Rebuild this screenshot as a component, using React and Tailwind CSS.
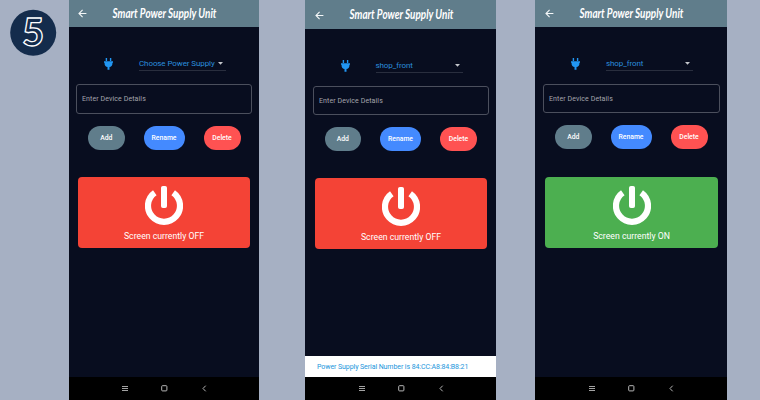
import React from "react";

function BackArrow() {
  return (
    <svg className="h-[9px] w-[9px] shrink-0" viewBox="0 0 9 9" fill="none" stroke="#f4f7f8" strokeWidth="1.1">
      <path d="M8.4 4.5H1M4.6 0.9L1 4.5l3.6 3.6" />
    </svg>
  );
}

function Title() {
  return (
    <svg className="h-[22px] w-[112px] shrink-0 overflow-visible" viewBox="0 0 112 22">
      <text
        x="0.5"
        y="14.6"
        fill="#ffffff"
        fontFamily="Lato, 'Liberation Sans', sans-serif"
        fontStyle="italic"
        fontWeight="700"
        fontSize="12.6"
        textLength="104"
        lengthAdjust="spacingAndGlyphs"
      >
        Smart Power Supply Unit
      </text>
    </svg>
  );
}

function Plug() {
  return (
    <svg className="h-[12px] w-[10px] shrink-0" viewBox="0 0 10 12" fill="#2196f3">
      <path d="M1.7 0h1.400v2.900H1.700zM5.900 0h1.400v2.900H5.900zM0 3.200h9v1.500h-.6v1.200c0 1.500-1.300 2.700-2.900 3.200v2.700h-2V9.100C1.900 8.600 0.600 7.400 0.600 5.900V4.700H0z" />
    </svg>
  );
}

function PowerIcon() {
  return (
    <svg className="h-[39px] w-[38px]" viewBox="0 0 38 39" fill="none" stroke="#ffffff">
      <path d="M9.800 6.700A16 16 0 1 0 28.200 6.700" strokeWidth="6.200" />
      <rect x="16.500" y="0.500" width="5" height="21" rx="1" fill="#ffffff" strokeWidth="1" />
    </svg>
  );
}

function NavBar({ inset }) {
  return (
    <div className={`flex h-[23px] shrink-0 items-center bg-black ${inset}`}>
      <svg className="h-[7px] w-[6px]" viewBox="0 0 6 7" fill="none" stroke="#b5b5b5" strokeWidth="0.9">
        <path d="M0 1.500h6M0 3.500h6M0 5.500h6" />
      </svg>
      <svg className="ml-[33px] h-[7px] w-[7px]" viewBox="0 0 7 7" fill="none" stroke="#b5b5b5">
        <rect x="0.700" y="0.700" width="5.200" height="5.200" rx="0.800" />
      </svg>
      <svg className="ml-[34px] h-[7px] w-[5px]" viewBox="0 0 5 7" fill="none" stroke="#b5b5b5">
        <path d="M3.700 0.700L1 3.500L3.700 6.300" />
      </svg>
    </div>
  );
}

function Phone({ frame, header, inset, plugRow, field, buttons, card, nav, selected, on, serial }) {
  return (
    <section className={`flex h-[400px] shrink-0 flex-col bg-[#080d1f] ${frame}`}>
      <header className={`flex shrink-0 items-center bg-[#607d8b] ${header}`}>
        <BackArrow />
        <div className="ml-[25px] flex">
          <Title />
        </div>
      </header>
      <div className={`flex flex-1 flex-col ${inset}`}>
        <div className={`flex h-[18px] shrink-0 items-start ${plugRow}`}>
          <div className="pt-[4px]">
            <Plug />
          </div>
          <div className="ml-[25px] flex h-[17px] w-[87px] items-center justify-between border-b border-[#292e3e] pr-[3px] pt-[3px]">
            <span className="whitespace-nowrap text-[8px] leading-[10px] tracking-[-0.1px] text-[#2b8ddd]">{selected}</span>
            <svg className="h-[3px] w-[5px] shrink-0" viewBox="0 0 5 3" fill="#c4c6cb">
              <path d="M0 0h5L2.500 2.800z" />
            </svg>
          </div>
        </div>
        <div className={`flex shrink-0 items-center rounded-[3px] border border-[#4b4f5d] pl-[5px] text-[7px] text-[#a4a6ad] ${field}`}>
          <span className="tracking-[0.1px]">Enter Device Details</span>
        </div>
        <div className={`flex h-[24px] shrink-0 items-center text-[6.8px] font-medium text-white ${buttons}`}>
          <button className="h-[24px] w-[36.5px] rounded-full bg-[#607d8b] pt-px">Add</button>
          <button className="ml-[19px] h-[24px] w-[41px] rounded-full bg-[#448aff] pt-px">Rename</button>
          <button className="ml-[19px] h-[24px] w-[37px] rounded-full bg-[#ff5252] pt-px">Delete</button>
        </div>
        <div className={`flex h-[71px] shrink-0 flex-col items-center rounded-[4px] pt-[9px] ${card} ${on ? "bg-[#4caf50]" : "bg-[#f44336]"}`}>
          <PowerIcon />
          <span className="mt-[5px] whitespace-nowrap text-[8.7px] leading-[13px] text-white">
            {on ? "Screen currently ON" : "Screen currently OFF"}
          </span>
        </div>
      </div>
      {serial && (
        <div className="flex h-[21px] shrink-0 items-center bg-white pl-[12px] pt-[2px] text-[7px] text-[#2196dc]">
          <span className="whitespace-nowrap tracking-[-0.08px]">Power Supply Serial Number is {serial}</span>
        </div>
      )}
      <NavBar inset={nav} />
    </section>
  );
}

export default function App() {
  return (
    <main className="flex h-[400px] w-[760px] overflow-hidden bg-[#a6b0c3] font-['Roboto','Liberation_Sans',sans-serif]">
      <aside className="w-[69px] shrink-0 pl-[10px] pt-[9px]">
        <svg className="h-[48px] w-[48px]" viewBox="0 0 48 48">
          <circle cx="23.200" cy="23.700" r="23" fill="#142c4c" />
          <text
            x="23"
            y="37.300"
            textAnchor="middle"
            fontFamily="Lato, sans-serif"
            fontWeight="900"
            fontSize="37.500"
            fill="#142c4c"
            stroke="#ffffff"
            strokeWidth="1.300"
          >
            5
          </text>
        </svg>
      </aside>
      <Phone
        frame="w-[190px]"
        header="h-[27px] pl-[9px]"
        inset="pl-[7px]"
        plugRow="mt-[27px] pl-[28px]"
        field="mt-[12px] h-[30px] w-[176px]"
        buttons="mt-[12px] pl-[12px]"
        card="mt-[27px] ml-[2px] w-[172px]"
        nav="pl-[53px]"
        selected="Choose Power Supply"
      />
      <Phone
        frame="ml-[46px] w-[191px]"
        header="h-[29px] pl-[10px] pt-px"
        inset="pl-[8px]"
        plugRow="mt-[27px] pl-[27.5px]"
        field="mt-[12px] h-[29px] w-[176px] pt-px"
        buttons="mt-[12px] pl-[11.5px]"
        card="mt-[27px] ml-[2px] w-[172px]"
        nav="pl-[53.5px]"
        selected="shop_front"
        serial="84:CC:A8:84:B8:21"
      />
      <Phone
        frame="ml-[39px] w-[192px]"
        header="h-[27px] pl-[10px]"
        inset="pl-[8px]"
        plugRow="mt-[27px] pl-[28px]"
        field="mt-[12px] h-[29px] w-[177px] pt-px"
        buttons="mt-[12px] pl-[12px]"
        card="mt-[27.5px] ml-[2px] w-[173px]"
        nav="pl-[54px]"
        selected="shop_front"
        on
      />
    </main>
  );
}
